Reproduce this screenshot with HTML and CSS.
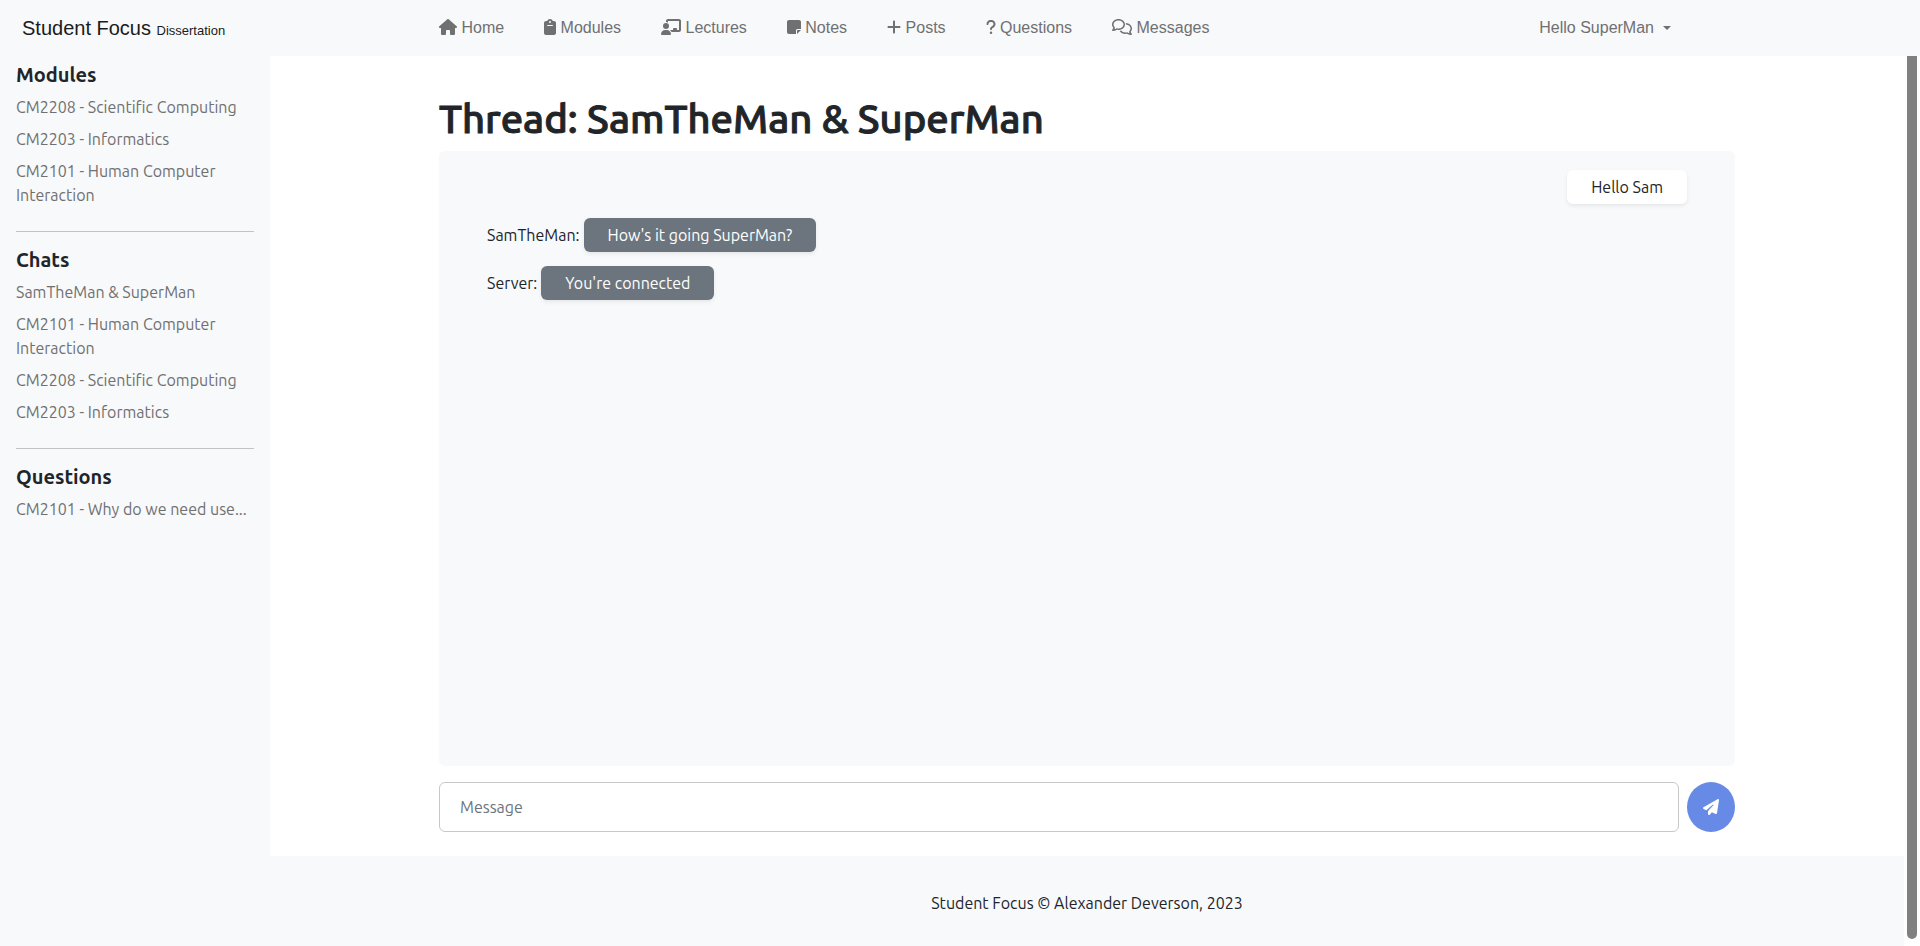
FILE: index.html
```html
<!DOCTYPE html>
<html lang="en">
<head>
<meta charset="utf-8">
<meta name="viewport" content="width=device-width, initial-scale=1">
<title>Student Focus - Thread</title>
<link rel="stylesheet" href="styles.css">
</head>
<body>
<header class="navbar">
  <a class="brand" href="#">Student Focus <small>Dissertation</small></a>
  <div class="navbar-inner">
    <nav class="nav">
      <a class="nav-link" href="#"><svg class="icon" viewBox="0 0 576 512" width="18" height="16" aria-hidden="true"><path d="M575.8 255.5c0 18-15 32.1-32 32.1h-32l.7 160.2c0 2.7-.2 5.4-.5 8.1V472c0 22.1-17.9 40-40 40H456c-1.1 0-2.2 0-3.3-.1c-1.4 .1-2.8 .1-4.2 .1H416 392c-22.1 0-40-17.9-40-40V448 384c0-17.7-14.3-32-32-32H256c-17.7 0-32 14.3-32 32v64 24c0 22.1-17.9 40-40 40H160 128.1c-1.5 0-3-.1-4.5-.2c-1.2 .1-2.4 .2-3.6 .2H104c-22.1 0-40-17.9-40-40V360c0-.9 0-1.9 .1-2.8V287.6H32c-18 0-32-14-32-32.1c0-9 3-17 10-24L266.4 8c7-7 15-8 22-8s15 2 21 7L564.8 231.5c8 7 12 15 11 24z"/></svg> Home</a>
      <a class="nav-link" href="#"><svg class="icon" viewBox="0 0 384 512" width="12" height="16" aria-hidden="true"><path d="M192 0c-41.8 0-77.4 26.7-90.5 64H64C28.7 64 0 92.7 0 128V448c0 35.3 28.7 64 64 64H320c35.3 0 64-28.7 64-64V128c0-35.3-28.7-64-64-64H282.5C269.4 26.7 233.8 0 192 0zm0 64a32 32 0 1 1 0 64 32 32 0 1 1 0-64zM112 192H272c8.8 0 16 7.2 16 16s-7.2 16-16 16H112c-8.8 0-16-7.2-16-16s7.2-16 16-16z"/></svg> Modules</a>
      <a class="nav-link" href="#"><svg class="icon" viewBox="0 0 640 512" width="20" height="16" aria-hidden="true"><path d="M160 64c0-35.3 28.7-64 64-64H576c35.3 0 64 28.7 64 64V352c0 35.3-28.7 64-64 64H336.8c-11.8-25.5-29.9-47.5-52.4-64H384V320c0-17.7 14.3-32 32-32h64c17.7 0 32 14.3 32 32v32h64V64L224 64v49.1C205.2 102.2 183.3 96 160 96V64zm0 64a96 96 0 1 1 0 192 96 96 0 1 1 0-192zM133.3 352h53.3C260.3 352 320 411.7 320 485.3c0 14.7-11.9 26.7-26.7 26.7H26.7C11.9 512 0 500.1 0 485.3C0 411.7 59.7 352 133.3 352z"/></svg> Lectures</a>
      <a class="nav-link" href="#"><svg class="icon" viewBox="0 0 448 512" width="14" height="16" aria-hidden="true"><path d="M64 32C28.7 32 0 60.7 0 96V416c0 35.3 28.7 64 64 64H288V368c0-26.5 21.5-48 48-48H448V96c0-35.3-28.7-64-64-64H64zM448 352H402.7 336c-8.8 0-16 7.2-16 16v66.7V480l32-32 64-64 32-32z"/></svg> Notes</a>
      <a class="nav-link" href="#"><svg class="icon" viewBox="0 0 448 512" width="14" height="16" aria-hidden="true"><path d="M256 80c0-17.7-14.3-32-32-32s-32 14.3-32 32V224H48c-17.7 0-32 14.3-32 32s14.3 32 32 32H192V432c0 17.7 14.3 32 32 32s32-14.3 32-32V288H400c17.7 0 32-14.3 32-32s-14.3-32-32-32H256V80z"/></svg> Posts</a>
      <a class="nav-link" href="#"><svg class="icon" viewBox="0 0 320 512" width="10" height="16" aria-hidden="true"><path d="M80 160c0-35.3 28.7-64 64-64h32c35.3 0 64 28.7 64 64v3.6c0 21.8-11.1 42.1-29.4 53.8l-42.2 27.1c-25.2 16.2-40.4 44.1-40.4 74V320c0 17.7 14.3 32 32 32s32-14.3 32-32v-1.4c0-8.2 4.2-15.8 11-20.2l42.2-27.1c36.6-23.6 58.8-64.1 58.8-107.7V160c0-70.7-57.3-128-128-128H144C73.3 32 16 89.3 16 160c0 17.7 14.3 32 32 32s32-14.3 32-32zm80 320a40 40 0 1 0 0-80 40 40 0 1 0 0 80z"/></svg> Questions</a>
      <a class="nav-link" href="#"><svg class="icon" viewBox="0 0 640 512" width="20" height="16" aria-hidden="true"><path d="M88.2 309.1c9.8-18.3 6.8-40.8-7.5-55.8C59.4 230.9 48 204 48 176c0-63.5 63.8-128 160-128s160 64.5 160 128s-63.8 128-160 128c-13.1 0-25.8-1.3-37.8-3.6c-10.4-2-21.2-.6-30.7 4.2c-4.1 2.1-8.3 4.1-12.6 6c-16 7.2-32.9 13.5-49.9 18c2.8-4.6 5.4-9.1 7.9-13.6c1.1-1.9 2.2-3.9 3.2-5.9zM0 176c0 41.8 17.2 80.1 45.9 110.3c-.9 1.7-1.9 3.5-2.8 5.1c-10.3 18.4-22.3 36.5-36.6 52.1c-6.6 7-8.3 17.2-4.6 25.9C5.8 378.3 14.4 384 24 384c43 0 86.5-13.3 122.7-29.7c4.8-2.2 9.6-4.5 14.2-6.8c15.1 3 30.9 4.5 47.1 4.5c114.9 0 208-78.8 208-176S322.9 0 208 0S0 78.8 0 176zM432 480c16.2 0 31.9-1.6 47.1-4.5c4.6 2.3 9.4 4.6 14.2 6.8C529.5 498.7 573 512 616 512c9.6 0 18.2-5.7 22-14.5c3.8-8.8 2-19-4.6-25.9c-14.2-15.6-26.2-33.7-36.6-52.1c-.9-1.7-1.9-3.4-2.8-5.1C622.8 384.1 640 345.8 640 304c0-94.4-87.9-171.5-198.2-175.8c4.1 15.2 6.2 31.2 6.2 47.8l0 .6c87.2 6.7 144 67.5 144 127.4c0 28-11.4 54.9-32.7 77.2c-14.3 15-17.3 37.6-7.5 55.8c1.1 2 2.2 4 3.2 5.9c2.5 4.5 5.2 9 7.9 13.6c-17-4.5-33.9-10.7-49.9-18c-4.3-1.9-8.5-3.9-12.6-6c-9.5-4.8-20.3-6.2-30.7-4.2c-12.1 2.4-24.7 3.6-37.8 3.6c-61.7 0-110-26.5-136.8-62.3c-16 5.4-32.8 9.4-50 11.8C279 439.8 350 480 432 480z"/></svg> Messages</a>
    </nav>
    <button class="user-menu" type="button" aria-haspopup="true">Hello SuperMan <span class="caret"></span></button>
  </div>
</header>
<div class="layout">
  <aside class="sidebar">
    <section class="side-group">
      <h2 class="side-title">Modules</h2>
      <a class="side-link" href="#">CM2208 - Scientific Computing</a>
      <a class="side-link" href="#">CM2203 - Informatics</a>
      <a class="side-link" href="#">CM2101 - Human Computer Interaction</a>
    </section>
    <section class="side-group">
      <h2 class="side-title">Chats</h2>
      <a class="side-link" href="#">SamTheMan &amp; SuperMan</a>
      <a class="side-link" href="#">CM2101 - Human Computer Interaction</a>
      <a class="side-link" href="#">CM2208 - Scientific Computing</a>
      <a class="side-link" href="#">CM2203 - Informatics</a>
    </section>
    <section class="side-group">
      <h2 class="side-title">Questions</h2>
      <a class="side-link" href="#">CM2101 - Why do we need use...</a>
    </section>
  </aside>
  <div class="page">
    <main class="content">
      <h1 class="thread-title">Thread: SamTheMan &amp; SuperMan</h1>
      <div class="chat">
        <div class="message message-own"><span class="bubble bubble-own">Hello Sam</span></div>
        <div class="message"><span>SamTheMan:</span><span class="bubble">How's it going SuperMan?</span></div>
        <div class="message"><span>Server:</span><span class="bubble">You're connected</span></div>
      </div>
      <form class="composer">
        <input class="composer-input" type="text" placeholder="Message" aria-label="Message">
        <button class="send" type="button" aria-label="Send"><svg class="send-icon" viewBox="0 0 512 512" width="16" height="16" aria-hidden="true"><path d="M498.1 5.6c10.1 7 15.4 19.1 13.5 31.2l-64 416c-1.5 9.7-7.4 18.2-16 23s-18.9 5.4-28 1.6L284 427.7l-68.5 74.1c-8.9 9.7-22.9 12.9-35.2 8.1S160 493.2 160 480V396.4c0-4 1.5-7.8 4.2-10.7L331.8 202.8c5.8-6.3 5.6-16-.4-22s-15.7-6.4-22-.7L106 360.8 17.7 316.6C7.1 311.3 .3 300.7 0 288.9s5.9-22.8 16.1-28.7l448-256c10.7-6.1 23.9-5.5 34 1.4z"/></svg></button>
      </form>
    </main>
    <footer class="footer">Student Focus © Alexander Deverson, 2023</footer>
  </div>
  <div class="scroll-track" aria-hidden="true"><div class="scroll-thumb"></div></div>
</div>
</body>
</html>
```
FILE: styles.css
```css
:root {
  --surface: #f8f9fb;
  --ink: #212529;
  --muted: #707071;
  --side-width: 270px;
  --track-width: 16px;
}

* {
  box-sizing: border-box;
}

body {
  display: flex;
  flex-direction: column;
  min-height: 100vh;
  margin: 0;
  background: #fff;
  color: var(--ink);
  font: 16px/24px Ubuntu, "Noto Sans", sans-serif;
}

a {
  color: inherit;
  text-decoration: none;
}

.navbar {
  display: grid;
  grid-template-columns: var(--side-width) 1fr var(--track-width);
  align-items: center;
  height: 56px;
  background: var(--surface);
  font-family: "Liberation Sans", Arial, sans-serif;
}

.brand {
  padding: 2px 0 0 22px;
  font-size: 20px;
  line-height: 30px;
  color: #1a1b1c;
}

.brand small {
  font-size: 13px;
}

.navbar-inner {
  display: flex;
  justify-content: space-between;
  width: 100%;
  max-width: 1296px;
  margin: 0 auto;
  padding-right: 64px;
  font-size: 16px;
  color: var(--muted);
}

.nav {
  display: flex;
  gap: 40px;
}

.icon {
  fill: currentColor;
  vertical-align: -2px;
}

.user-menu {
  display: flex;
  align-items: center;
  gap: 9px;
  padding: 0;
  border: 0;
  background: none;
  color: inherit;
  font: inherit;
}

.caret {
  border: 4px solid transparent;
  border-top-color: currentColor;
  border-bottom: 0;
}

.layout {
  display: grid;
  grid-template-columns: var(--side-width) 1fr var(--track-width);
  flex: 1;
}

.sidebar {
  padding: 7px 16px;
  background: var(--surface);
}

.side-group {
  display: flex;
  flex-direction: column;
  gap: 8px;
}

.side-group + .side-group {
  margin-top: 24px;
  padding-top: 16px;
  border-top: 1px solid #c2c3c5;
}

.side-title {
  margin: 0;
  font-size: 20px;
  font-weight: 600;
  line-height: 24px;
}

.side-link {
  color: var(--muted);
}

.page {
  display: flex;
  flex-direction: column;
}

.content {
  display: flex;
  flex: 1;
  flex-direction: column;
  width: 100%;
  max-width: 1296px;
  margin: 0 auto;
  padding: 39px 0 24px;
}

.thread-title {
  margin: 0 0 8px;
  font-size: 40px;
  font-weight: 500;
  line-height: 48px;
  -webkit-text-stroke: 1px currentColor;
}

.chat {
  display: flex;
  flex: 1;
  flex-direction: column;
  gap: 14px;
  padding: 19px 48px;
  border-radius: 6px;
  background: var(--surface);
}

.message {
  display: flex;
  align-items: center;
  gap: 4px;
}

.message-own {
  justify-content: flex-end;
}

.bubble {
  padding: 5px 24px;
  border-radius: 6px;
  background: #6c757d;
  box-shadow: 0 2px 4px rgba(0, 0, 0, .075);
  color: #fff;
}

.bubble-own {
  background: #fff;
  color: var(--ink);
}

.composer {
  display: flex;
  gap: 8px;
  margin-top: 16px;
}

.composer-input {
  flex: 1;
  height: 50px;
  padding: 0 20px;
  border: 1px solid #c8c8c8;
  border-radius: 6px;
  background: #fff;
  color: var(--ink);
  font: inherit;
}

.composer-input::placeholder {
  color: #6c757d;
  opacity: 1;
}

.send {
  display: grid;
  place-items: center;
  width: 48px;
  padding: 0;
  border: 0;
  border-radius: 50%;
  background: #668ae6;
  color: #fff;
}

.send-icon {
  fill: currentColor;
}

.footer {
  padding: 35px 0 31px;
  background: var(--surface);
  text-align: center;
}

.scroll-track {
  display: flex;
  padding: 0 3px 7px;
}

.scroll-thumb {
  flex: 1;
  border-radius: 0 0 5px 5px;
  background: #808080;
}
```
